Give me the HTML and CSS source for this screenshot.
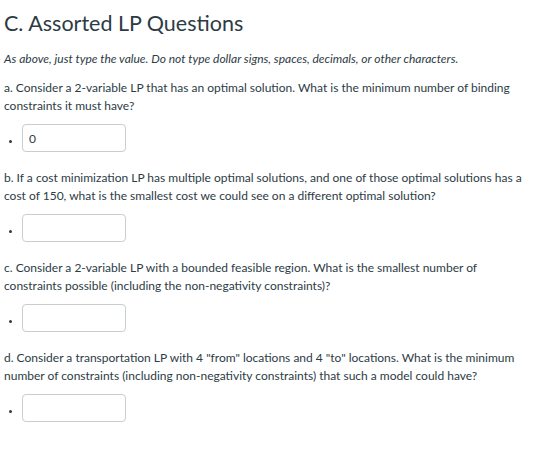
FILE: index.html
```html
<!DOCTYPE html>
<html>
<head>
<meta charset="utf-8">
<link rel="stylesheet" href="styles.css">
</head>
<body>
<div class="page">
  <h2 class="title">C. Assorted LP Questions</h2>
  <p class="note">As above, just type the value. Do not type dollar signs, spaces, decimals, or other characters.</p>

  <div class="question">
    <p class="qtext">a. Consider a 2-variable LP that has an optimal solution. What is the minimum number of binding constraints it must have?</p>
    <div class="answer"><span class="dot"></span><input class="box" type="text" value="0"></div>
  </div>

  <div class="question">
    <p class="qtext">b. If a cost minimization LP has multiple optimal solutions, and one of those optimal solutions has a cost of 150, what is the smallest cost we could see on a different optimal solution?</p>
    <div class="answer"><span class="dot"></span><input class="box" type="text" value=""></div>
  </div>

  <div class="question">
    <p class="qtext">c. Consider a 2-variable LP with a bounded feasible region. What is the smallest number of constraints possible (including the non-negativity constraints)?</p>
    <div class="answer"><span class="dot"></span><input class="box" type="text" value=""></div>
  </div>

  <div class="question">
    <p class="qtext">d. Consider a transportation LP with 4 "from" locations and 4 "to" locations. What is the minimum number of constraints (including non-negativity constraints) that such a model could have?</p>
    <div class="answer"><span class="dot"></span><input class="box" type="text" value=""></div>
  </div>
</div>
</body>
</html>
```

FILE: styles.css
```css
html, body {
  margin: 0;
  padding: 0;
  background: #ffffff;
}
body {
  font-family: Lato, "Liberation Sans", sans-serif;
  color: #2d3b45;
}
.page {
  padding: 10px 4px 0 4px;
  width: 525px;
}
.title {
  font-size: 21.5px;
  font-weight: 400;
  line-height: 26px;
  margin: 0 0 14px 0;
}
.note {
  font-style: italic;
  font-size: 12px;
  line-height: 17px;
  margin: 0 0 12px 0;
}
.question {
  margin: 0 0 17px 0;
}
.qtext {
  font-size: 12px;
  line-height: 18px;
  margin: 0 0 9px 0;
}
.answer {
  display: flex;
  align-items: center;
  gap: 10px;
  padding-left: 5px;
}
.dot {
  width: 3px;
  height: 3px;
  border-radius: 50%;
  background: #2d3b45;
  margin-top: 7px;
}
.box {
  box-sizing: border-box;
  width: 104px;
  height: 28px;
  border: 1px solid #c7cdd1;
  border-radius: 4px;
  padding: 0 6px;
  font-family: Lato, "Liberation Sans", sans-serif;
  font-size: 12px;
  color: #2d3b45;
  background: #fff;
  margin: 0;
}
```
